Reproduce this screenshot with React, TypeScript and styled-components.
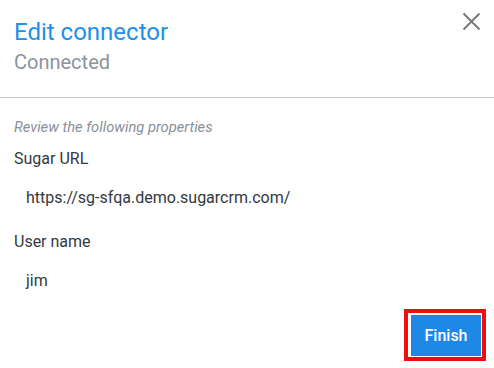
import React from "react";
import styled, { createGlobalStyle } from "styled-components";

const Global = createGlobalStyle`
  html, body { margin: 0; padding: 0; background: #ffffff; }
  body { font-family: Roboto, "Liberation Sans", sans-serif; }
  * { box-sizing: border-box; }
`;

const Dialog = styled.div`
  width: 494px;
  height: 368px;
  background: #ffffff;
  display: flex;
  flex-direction: column;
`;

const Header = styled.header`
  position: relative;
  height: 98px;
  padding: 17px 14px 0 14px;
  border-bottom: 1px solid #c3ccd8;
`;

const Title = styled.h1`
  margin: 0;
  font-size: 24px;
  font-weight: 400;
  line-height: 30px;
  color: #2090e8;
`;

const Subtitle = styled.div`
  margin-top: 3px;
  font-size: 20px;
  line-height: 24px;
  color: #8c949c;
`;

const CloseButton = styled.button`
  position: absolute;
  top: 11px;
  right: 12px;
  width: 21px;
  height: 21px;
  padding: 0;
  border: none;
  background: transparent;
  display: flex;
  align-items: center;
  justify-content: center;
  cursor: pointer;
`;

const Body = styled.div`
  padding: 20px 14px 0 14px;
  display: flex;
  flex-direction: column;
`;

const Hint = styled.div`
  font-size: 14.7px;
  font-style: italic;
  line-height: 18px;
  color: #8a9099;
`;

const Field = styled.div<{ $first?: boolean }>`
  display: flex;
  flex-direction: column;
  margin-top: ${(p) => (p.$first ? "13px" : "24px")};
`;

const Label = styled.div`
  font-size: 16px;
  line-height: 20px;
  color: #333940;
`;

const Value = styled.div`
  margin-top: 19px;
  padding-left: 12px;
  font-size: 16px;
  line-height: 20px;
  color: #333940;
`;

const Footer = styled.footer`
  margin-top: auto;
  padding: 0 8px 7px 0;
  display: flex;
  justify-content: flex-end;
`;

const Highlight = styled.div`
  border: 4px solid #f20d0d;
  padding: 2px 1px 1px 3px;
  display: flex;
`;

const PrimaryButton = styled.button`
  width: 70px;
  height: 41px;
  border: none;
  border-radius: 0;
  background: #1e88e5;
  color: #ffffff;
  font-family: Roboto, "Liberation Sans", sans-serif;
  font-size: 16px;
  font-weight: 500;
  cursor: pointer;
`;

export default function App() {
  return (
    <>
      <Global />
      <Dialog>
        <Header>
          <Title>Edit connector</Title>
          <Subtitle>Connected</Subtitle>
          <CloseButton aria-label="Close">
            <svg width="19" height="19" viewBox="0 0 19 19">
              <path d="M1.5 1.5 L17.5 17.5 M17.5 1.5 L1.5 17.5" stroke="#757575" strokeWidth="1.8" fill="none" />
            </svg>
          </CloseButton>
        </Header>
        <Body>
          <Hint>Review the following properties</Hint>
          <Field $first>
            <Label>Sugar URL</Label>
            <Value>https://sg-sfqa.demo.sugarcrm.com/</Value>
          </Field>
          <Field>
            <Label>User name</Label>
            <Value>jim</Value>
          </Field>
        </Body>
        <Footer>
          <Highlight>
            <PrimaryButton>Finish</PrimaryButton>
          </Highlight>
        </Footer>
      </Dialog>
    </>
  );
}
